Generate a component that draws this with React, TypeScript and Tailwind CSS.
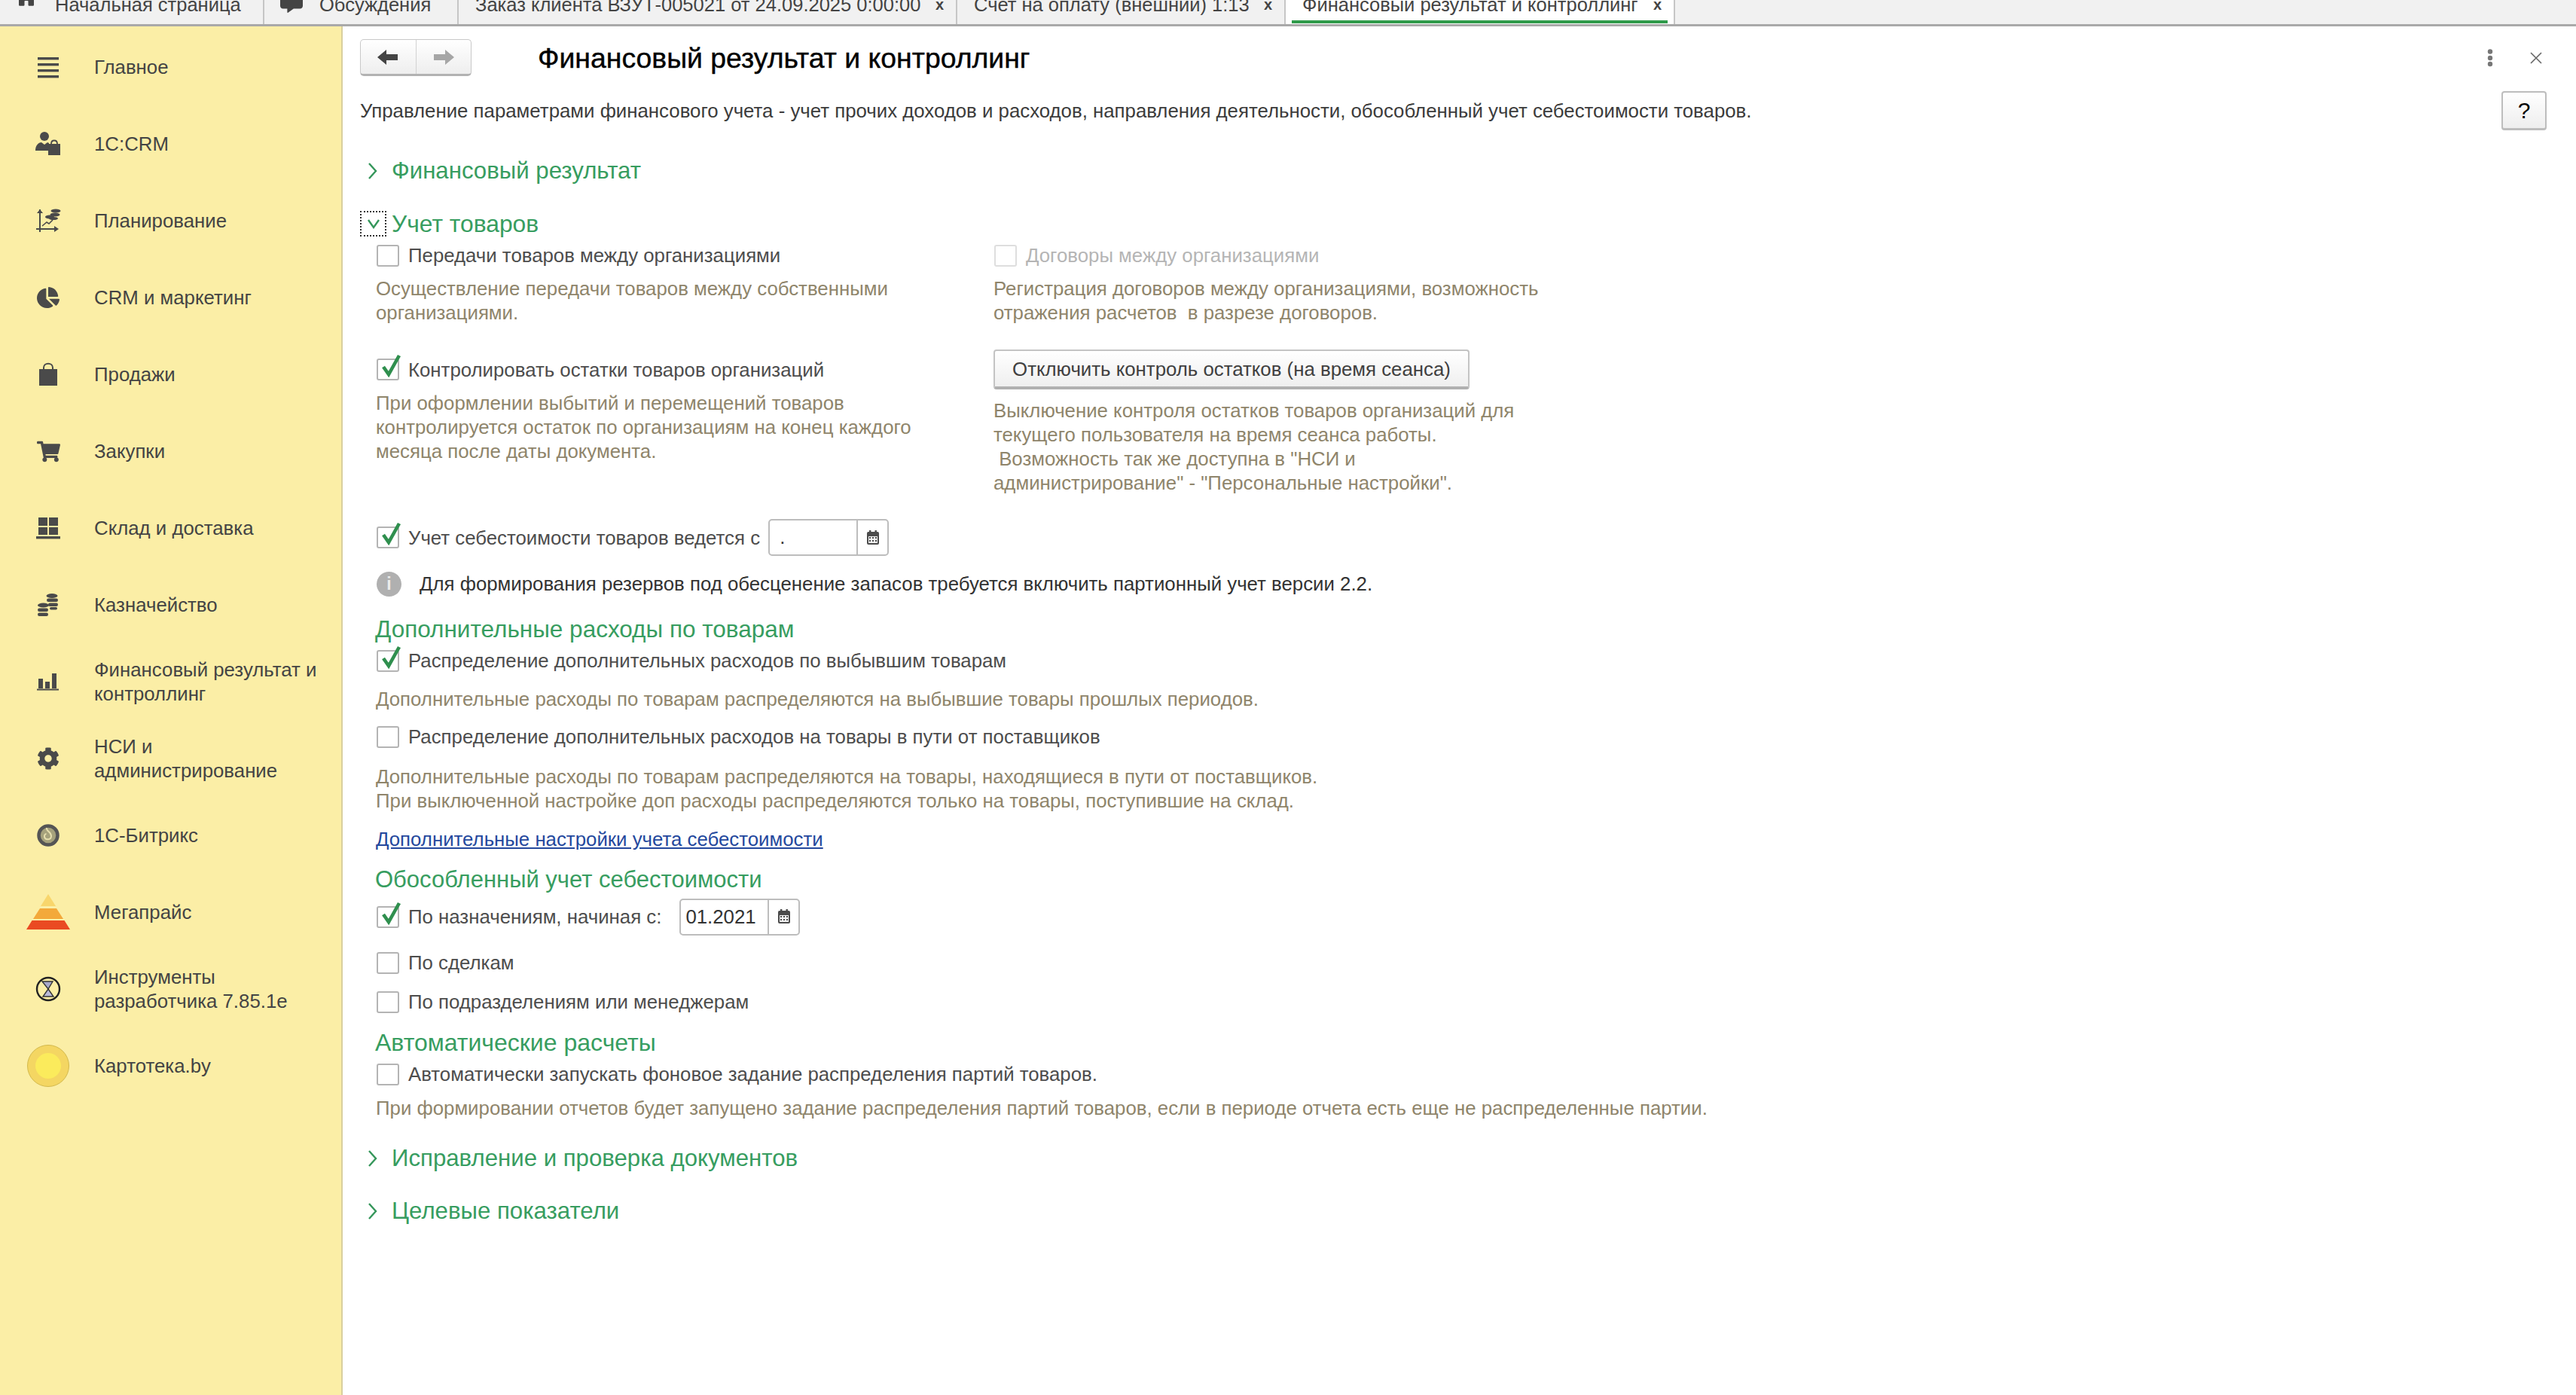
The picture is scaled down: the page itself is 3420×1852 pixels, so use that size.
import type { ReactNode } from 'react'
import { FaCog, FaShoppingCart, FaChartPie, FaHome, FaCommentAlt } from 'react-icons/fa'

const ink = '#4a4a4a'

function IconMenu() {
  return (
    <svg width="30" height="30" viewBox="0 0 30 30" fill={ink}>
      <rect x="1" y="2" width="28" height="3.4" />
      <rect x="1" y="10" width="28" height="3.4" />
      <rect x="1" y="18" width="28" height="3.4" />
      <rect x="1" y="26" width="28" height="3.4" />
    </svg>
  )
}

function IconCrm() {
  return (
    <svg width="34" height="34" viewBox="0 0 34 34" fill={ink}>
      <circle cx="12" cy="7" r="6" />
      <path d="M0 26c0-7 4-11 8-11l4 3 4-3 2 1v10H1z" />
      <rect x="17" y="17" width="16" height="15" />
      <path d="M21 17c0-6 8-6 8 0" fill="none" stroke={ink} strokeWidth="1.8" />
    </svg>
  )
}

function IconPlan() {
  return (
    <svg width="34" height="34" viewBox="0 0 34 34" fill="none" stroke={ink} strokeWidth="2">
      <path d="M6 2v30M1 28h28" />
      <path d="M2 7l4-5 4 5zM25 24l6 4-6 4z" fill={ink} stroke="none" />
      <path d="M9 24l6-5 3 2 5-5" strokeWidth="1.6" />
      <ellipse cx="27" cy="4" rx="6.5" ry="2.4" fill={ink} stroke="none" />
      <ellipse cx="26" cy="9" rx="6.5" ry="2.4" fill={ink} stroke="none" />
      <ellipse cx="19" cy="12" rx="6" ry="2.4" fill={ink} stroke="none" />
      <ellipse cx="24" cy="14" rx="6" ry="2" fill={ink} stroke="none" />
    </svg>
  )
}

function IconBag() {
  return (
    <svg width="26" height="32" viewBox="0 0 26 32" fill={ink}>
      <rect x="1" y="9" width="24" height="22" />
      <path d="M7 12V7c0-7 12-7 12 0v5" fill="none" stroke={ink} strokeWidth="2" />
    </svg>
  )
}

function IconWarehouse() {
  return (
    <svg width="32" height="30" viewBox="0 0 32 30" fill={ink}>
      <rect x="3" y="1" width="12" height="11" />
      <rect x="17" y="1" width="12" height="11" />
      <rect x="3" y="14" width="12" height="10" />
      <rect x="17" y="14" width="12" height="10" />
      <rect x="0" y="26" width="32" height="3.4" />
    </svg>
  )
}

function IconCoins() {
  return (
    <svg width="28" height="30" viewBox="0 0 28 30" fill={ink}>
      <ellipse cx="19" cy="3" rx="7.500" ry="3" />
      <rect x="12" y="6.500" width="15" height="4.500" rx="2.200" />
      <rect x="14" y="12.500" width="13" height="4.500" rx="2.200" />
      <rect x="16" y="18" width="10" height="3.500" rx="1.700" />
      <ellipse cx="7.500" cy="15.500" rx="7.500" ry="3" />
      <rect x="0" y="19.500" width="14" height="4.500" rx="2.200" />
      <rect x="0" y="25.500" width="14" height="4.500" rx="2.200" />
    </svg>
  )
}

function IconBars() {
  return (
    <svg width="30" height="24" viewBox="0 0 30 24" fill={ink}>
      <rect x="2" y="8" width="6" height="13" />
      <rect x="11" y="12" width="6" height="9" />
      <rect x="20" y="1" width="6" height="20" />
      <rect x="0" y="21.5" width="29" height="2" />
    </svg>
  )
}

function IconBitrix() {
  return (
    <svg width="30" height="30" viewBox="0 0 30 30" fill="none">
      <circle cx="15" cy="15" r="12.5" stroke="#555" strokeWidth="4.5" fill="#a6a27c" />
      <path d="M13 5c-1 5 6 5 6 11 0 5-8 6-9 1-.5-2 1-4 2.5-4" stroke="#e6dfae" strokeWidth="2" />
    </svg>
  )
}

function IconPyramid() {
  return (
    <svg width="60" height="48" viewBox="0 0 60 48">
      <path d="M30 0l10 16H20z" fill="#f8d66c" />
      <path d="M19 19h22l9 14H10z" fill="#f3a93a" />
      <path d="M8.500 35h43L59 47H1z" fill="#ea4a22" />
    </svg>
  )
}

function IconDev() {
  return (
    <svg width="34" height="34" viewBox="0 0 34 34">
      <circle cx="17" cy="17" r="15" fill="none" stroke="#222" strokeWidth="2.4" />
      <path d="M9 7h14l-6 10z" fill="#a9a9c9" stroke="#333" strokeWidth="1.4" />
      <path d="M17 17l7 10H10z" fill="#b9b9d9" stroke="#333" strokeWidth="1.4" />
    </svg>
  )
}

function IconCoin() {
  return (
    <span className="flex h-[56px] w-[56px] items-center justify-center rounded-full border border-[#d3b94d] bg-[#f4d662]">
      <span className="h-[34px] w-[34px] rounded-full bg-[#fbeb5c]" />
    </span>
  )
}

function IconCalendar() {
  return (
    <svg width="18" height="20" viewBox="0 0 18 20" fill="#4b4b4b">
      <rect x="4" y="0" width="2.400" height="4" />
      <rect x="11.500" y="0" width="2.400" height="4" />
      <rect x="1" y="2" width="16" height="17" rx="2" />
      <rect x="3" y="8" width="12" height="9" fill="#f4f4f4" />
      <path d="M4 9h2v2H4zM8 9h2v2H8zM12 9h2v2h-2zM4 13h2v2H4zM8 13h2v2H8zM12 13h2v2h-2z" fill="#4b4b4b" />
    </svg>
  )
}

const menu: { label: ReactNode; icon: ReactNode }[] = [
  { label: 'Главное', icon: <IconMenu /> },
  { label: '1С:CRM', icon: <IconCrm /> },
  { label: 'Планирование', icon: <IconPlan /> },
  { label: 'CRM и маркетинг', icon: <FaChartPie size={30} color={ink} /> },
  { label: 'Продажи', icon: <IconBag /> },
  { label: 'Закупки', icon: <FaShoppingCart size={31} color={ink} /> },
  { label: 'Склад и доставка', icon: <IconWarehouse /> },
  { label: 'Казначейство', icon: <IconCoins /> },
  { label: <>Финансовый результат и<br />контроллинг</>, icon: <IconBars /> },
  { label: <>НСИ и<br />администрирование</>, icon: <FaCog size={30} color={ink} /> },
  { label: '1С-Битрикс', icon: <IconBitrix /> },
  { label: 'Мегапрайс', icon: <IconPyramid /> },
  { label: <>Инструменты<br />разработчика 7.85.1e</>, icon: <IconDev /> },
  { label: 'Картотека.by', icon: <IconCoin /> },
]

const tabs = [
  { label: 'Начальная страница', w: 'w-[351px]', pl: 'pl-[73px]', icon: <span className="absolute left-[20px] top-[-19px]"><FaHome size={30} color="#444" /></span> },
  { label: 'Обсуждения', w: 'w-[258px]', pl: 'pl-[73px]', icon: <span className="absolute left-[21px] top-[-13px]"><FaCommentAlt size={30} color="#444" /></span> },
  { label: 'Заказ клиента ВЗУТ-005021 от 24.09.2025 0:00:00', w: 'w-[662px]', pl: 'pl-[22px]', close: true },
  { label: 'Счет на оплату (внешний) 1:13', w: 'w-[436px]', pl: 'pl-[22px]', close: true },
]

function TabClose() {
  return <span className="ml-auto mr-[16px] text-[20px] font-bold leading-[12px] text-[#444]">x</span>
}

function Check({ on, off }: { on?: boolean; off?: boolean }) {
  return (
    <span className={`relative ml-[1px] block h-[29px] w-[30px] shrink-0 rounded-[3px] border-2 bg-white ${off ? 'border-[#dedede]' : 'border-[#b4b4b4]'}`}>
      {on && (
        <svg className="absolute left-[2px] top-[-9px]" width="30" height="32" viewBox="0 0 30 32" fill="none">
          <path d="M5 18l7 10L26 3" stroke="#2f8f4e" strokeWidth="4.600" />
        </svg>
      )}
    </span>
  )
}

function CheckRow({ on, children, className = '' }: { on?: boolean; children: ReactNode; className?: string }) {
  return (
    <div className={`flex h-[28px] items-center ${className}`}>
      <Check on={on} />
      <span className="ml-[12px] whitespace-nowrap text-[#4d4d4d]">{children}</span>
    </div>
  )
}

function Help({ children, className = '' }: { children: ReactNode; className?: string }) {
  return <div className={`whitespace-pre leading-[32px] text-[#8f856b] ${className}`}>{children}</div>
}

function Chevron({ down }: { down?: boolean }) {
  return (
    <svg width="16" height="22" viewBox="0 0 16 22" fill="none" stroke="#34965a" strokeWidth="2.400">
      {down ? <path d="M1 6l7 10 7-10" /> : <path d="M3 1l9 10-9 10" />}
    </svg>
  )
}

function Group({ children, className = '' }: { children: ReactNode; className?: string }) {
  return (
    <div className={`flex h-[38px] items-center ${className}`}>
      <span className="flex w-[42px] justify-center pr-[8px]"><Chevron /></span>
      <span className="text-[31.2px] text-[#379d60]">{children}</span>
    </div>
  )
}

function Sub({ children, className = '' }: { children: ReactNode; className?: string }) {
  return <div className={`ml-[20px] flex h-[38px] items-center text-[#379d60] ${className}`}>{children}</div>
}

function DateField({ value, className = '' }: { value: string; className?: string }) {
  return (
    <div className={`flex h-[49px] w-[160px] rounded-[5px] border-2 border-[#bdbdbd] bg-white ${className}`}>
      <span className="flex-1 pl-[6px] leading-[45px] text-[#333]">{value}</span>
      <span className="flex w-[41px] items-center justify-center border-l-2 border-[#bdbdbd]"><IconCalendar /></span>
    </div>
  )
}

export default function App() {
  return (
    <div className="flex h-[1852px] w-[3420px] flex-col overflow-hidden bg-white font-['Liberation_Sans',Arial,sans-serif] text-[25.8px] leading-[32px]">
      <div className="flex h-[35px] shrink-0 items-stretch overflow-hidden border-b-[3px] border-[#a9a9a9] bg-[#f1f1f1] text-[25.5px] text-[#444]">
        {tabs.map((t, i) => (
          <div key={i} className={`relative flex ${t.w} ${t.pl} shrink-0 items-start border-r-2 border-[#c6c6c6] leading-[12px]`}>
            {t.icon}
            <span className="whitespace-nowrap">{t.label}</span>
            {t.close && <TabClose />}
          </div>
        ))}
        <div className="relative flex w-[517px] shrink-0 items-start border-r-2 border-[#c6c6c6] bg-white pl-[22px] leading-[12px]">
          <span className="whitespace-nowrap">Финансовый результат и контроллинг</span>
          <TabClose />
          <span className="absolute bottom-[1px] left-[8px] right-[8px] h-[4px] bg-[#2f9a4a]" />
        </div>
      </div>

      <div className="flex min-h-0 flex-1">
        <aside className="w-[455px] shrink-0 border-r-2 border-[#d9cf9d] bg-[#fbeea6] pt-[3px] text-[#444]">
          {menu.map((m, i) => (
            <div key={i} className="flex h-[102px] items-center">
              <span className="flex w-[125px] shrink-0 justify-center pl-[3px]">{m.icon}</span>
              <span className="leading-[32px]">{m.label}</span>
            </div>
          ))}
        </aside>

        <main className="min-w-0 flex-1 pl-[23px] pr-[39px] pt-[17px] text-[#4d4d4d]">
          <div className="flex h-[49px] items-center">
            <div className="flex h-[49px] w-[148px] overflow-hidden rounded-[5px] border border-[#c9c9c9] border-b-[3px] border-b-[#b2b2b2] bg-gradient-to-b from-white to-[#eeeeee]">
              <span className="flex flex-1 items-center justify-center border-r border-[#d2d2d2]">
                <svg width="30" height="22" viewBox="0 0 30 22" fill="#444"><path d="M1 11L13 1v6h15v8H13v6z" /></svg>
              </span>
              <span className="flex flex-1 items-center justify-center">
                <svg width="30" height="22" viewBox="0 0 30 22" fill="#a6a6a6"><path d="M29 11L17 1v6H2v8h15v6z" /></svg>
              </span>
            </div>
            <h1 className="ml-[88px] whitespace-nowrap text-[37.4px] font-normal text-black [-webkit-text-stroke:0.4px_black]">Финансовый результат и контроллинг</h1>
            <div className="ml-auto flex items-center">
              <svg width="10" height="24" viewBox="0 0 10 24" fill="#777" className="mr-[48px]">
                <circle cx="5" cy="3.500" r="3.200" /><circle cx="5" cy="12" r="3.200" /><circle cx="5" cy="20" r="3.200" />
              </svg>
              <svg width="16" height="16" viewBox="0 0 16 16" stroke="#666" strokeWidth="1.600" className="mr-[6px]">
                <path d="M1 1l14 14M15 1L1 15" />
              </svg>
            </div>
          </div>

          <div className="mt-[20px] flex h-[52px] items-center justify-between">
            <span className="whitespace-nowrap text-[#3c3c3c]">Управление параметрами финансового учета - учет прочих доходов и расходов, направления деятельности, обособленный учет себестоимости товаров.</span>
            <button className="h-[52px] w-[60px] rounded-[4px] border-2 border-[#bdbdbd] border-b-[3px] bg-gradient-to-b from-white to-[#eeeeee] text-[30px] text-black">?</button>
          </div>

          <Group className="mt-[35px]">Финансовый результат</Group>

          <div className="mt-[34px] flex h-[34px] items-center">
            <span className="flex h-[34px] w-[35px] items-center justify-center border-2 border-dotted border-[#333]"><Chevron down /></span>
            <span className="ml-[7px] text-[31.8px] text-[#379d60]">Учет товаров</span>
          </div>

          <div className="ml-[21px] grid w-[1480px] grid-cols-[820px_1fr]">
            <div>
              <CheckRow className="mt-[11px]">Передачи товаров между организациями</CheckRow>
              <Help className="mt-[14px]">{'Осуществление передачи товаров между собственными\nорганизациями.'}</Help>
              <div className="mt-[33px] flex h-[53px] items-center">
                <Check on />
                <span className="ml-[12px] whitespace-nowrap">Контролировать остатки товаров организаций</span>
              </div>
              <Help className="mt-[2px]">{'При оформлении выбытий и перемещений товаров\nконтролируется остаток по организациям на конец каждого\nмесяца после даты документа.'}</Help>
            </div>
            <div>
              <div className="mt-[11px] flex h-[28px] items-center">
                <Check off />
                <span className="ml-[12px] whitespace-nowrap text-[#b5b5b5]">Договоры между организациями</span>
              </div>
              <Help className="mt-[14px]">{'Регистрация договоров между организациями, возможность\nотражения расчетов  в разрезе договоров.'}</Help>
              <button className="mt-[33px] block h-[53px] w-[632px] rounded-[4px] border-2 border-[#c4c4c4] border-b-[4px] border-b-[#b0b0b0] bg-gradient-to-b from-white to-[#efefef] text-[#404040]">Отключить контроль остатков (на время сеанса)</button>
              <Help className="mt-[12px]">{'Выключение контроля остатков товаров организаций для\nтекущего пользователя на время сеанса работы.\n Возможность так же доступна в "НСИ и\nадминистрирование" - "Персональные настройки".'}</Help>
            </div>
          </div>

          <div className="ml-[21px]">
            <div className="mt-[32px] flex h-[49px] items-center">
              <Check on />
              <span className="ml-[12px] whitespace-nowrap">Учет себестоимости товаров ведется с</span>
              <DateField value=" ." className="ml-[11px] whitespace-pre" />
            </div>

            <div className="mt-[21px] flex h-[32px] items-center">
              <span className="ml-[1px] flex h-[33px] w-[33px] items-center justify-center rounded-full bg-[#b0b0b0] text-[23px] font-bold text-[#ececec]">i</span>
              <span className="ml-[24px] whitespace-nowrap text-[#333]">Для формирования резервов под обесценение запасов требуется включить партионный учет версии 2.2.</span>
            </div>
          </div>

          <Sub className="mt-[25px] text-[31.5px]">Дополнительные расходы по товарам</Sub>
          <div className="ml-[21px]">
            <CheckRow on className="mt-[9px]">Распределение дополнительных расходов по выбывшим товарам</CheckRow>
            <Help className="mt-[21px]">Дополнительные расходы по товарам распределяются на выбывшие товары прошлых периодов.</Help>
            <CheckRow className="mt-[20px]">Распределение дополнительных расходов на товары в пути от поставщиков</CheckRow>
            <Help className="mt-[23px]">{'Дополнительные расходы по товарам распределяются на товары, находящиеся в пути от поставщиков.\nПри выключенной настройке доп расходы распределяются только на товары, поступившие на склад.'}</Help>
            <a className="mt-[19px] block leading-[32px] text-[#24489d] underline">Дополнительные настройки учета себестоимости</a>
          </div>

          <Sub className="mt-[19px] text-[31px]">Обособленный учет себестоимости</Sub>
          <div className="ml-[21px]">
            <div className="mt-[6px] flex h-[48px] items-center">
              <Check on />
              <span className="ml-[12px] whitespace-nowrap">По назначениям, начиная с:</span>
              <DateField value="01.2021" className="ml-[24px]" />
            </div>
            <CheckRow className="mt-[23px]">По сделкам</CheckRow>
            <CheckRow className="mt-[24px]">По подразделениям или менеджерам</CheckRow>
          </div>

          <Sub className="mt-[21px] text-[32px]">Автоматические расчеты</Sub>
          <div className="ml-[21px]">
            <CheckRow className="mt-[9px]">Автоматически запускать фоновое задание распределения партий товаров.</CheckRow>
            <Help className="mt-[15px]">При формировании отчетов будет запущено задание распределения партий товаров, если в периоде отчета есть еще не распределенные партии.</Help>
          </div>

          <Group className="mt-[32px]">Исправление и проверка документов</Group>
          <Group className="mt-[32px]">Целевые показатели</Group>
        </main>
      </div>
    </div>
  )
}
